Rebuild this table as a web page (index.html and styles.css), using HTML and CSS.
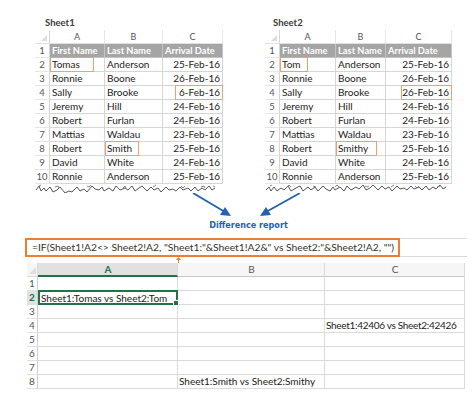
FILE: index.html
```html
<!DOCTYPE html>
<html>
<head>
<meta charset="utf-8">
<link rel="stylesheet" href="styles.css">
</head>
<body>
<div class="page">
  <div class="top">
    <div class="sheet s1">
      <div class="label">Sheet1</div>
      <div class="grid g1">
        <div class="corner"></div><div class="ch">A</div><div class="ch">B</div><div class="ch">C</div>
        <div class="rh">1</div><div class="hd">First Name</div><div class="hd">Last Name</div><div class="hd">Arrival Date</div>
        <div class="rh">2</div><div class="c"><span class="hl w43"></span>Tomas</div><div class="c">Anderson</div><div class="c d">25-Feb-16</div>
        <div class="rh">3</div><div class="c">Ronnie</div><div class="c">Boone</div><div class="c d">26-Feb-16</div>
        <div class="rh">4</div><div class="c">Sally</div><div class="c">Brooke</div><div class="c d"><span class="hl hr w47"></span>6-Feb-16</div>
        <div class="rh">5</div><div class="c">Jeremy</div><div class="c">Hill</div><div class="c d">24-Feb-16</div>
        <div class="rh">6</div><div class="c">Robert</div><div class="c">Furlan</div><div class="c d">24-Feb-16</div>
        <div class="rh">7</div><div class="c">Mattias</div><div class="c">Waldau</div><div class="c d">23-Feb-16</div>
        <div class="rh">8</div><div class="c">Robert</div><div class="c"><span class="hl w33"></span>Smith</div><div class="c d">25-Feb-16</div>
        <div class="rh">9</div><div class="c">David</div><div class="c">White</div><div class="c d">24-Feb-16</div>
        <div class="rh">10</div><div class="c">Ronnie</div><div class="c">Anderson</div><div class="c d">25-Feb-16</div>
      </div>
      <svg class="wave" width="188" height="9" viewBox="0 0 188 9">
        <path d="M1,6 l3,-4 l2,5 l3,-3 l2,3 l4,-4 l3,5 l4,-2 l3,-3 l5,6 l4,-2 l3,1 l5,-5 l3,4 l4,-2 l3,3 l5,-6 l3,3 l4,1 l3,-3 l2,4 l5,-3 l4,3 l3,-5 l4,4 l5,-2 l3,2 l4,-4 l3,5 l4,-3 l3,-2 l5,5 l4,-4 l3,3 l4,-2 l3,4 l5,-5 l3,3 l4,-1 l3,2 l4,-4 l3,3 l5,-2 l3,3 l4,-4 l3,4 l4,-3 l3,2 l4,-4 l3,4 l3,-2" fill="none" stroke="#555" stroke-width="1"/>
        <path d="M4,2 l2,-1 M20,3 l3,-1 l1,2 M52,2 l2,1 l2,-2 M88,4 l2,-2 l1,2 M118,3 l3,-2 M146,2 l2,2 l2,-2 M166,3 l3,-1 l1,2 M178,2 l2,1" fill="none" stroke="#666" stroke-width="0.8"/>
      </svg>
    </div>
    <div class="sheet s2">
      <div class="label">Sheet2</div>
      <div class="grid g2">
        <div class="corner"></div><div class="ch">A</div><div class="ch">B</div><div class="ch">C</div>
        <div class="rh">1</div><div class="hd">First Name</div><div class="hd">Last Name</div><div class="hd">Arrival Date</div>
        <div class="rh">2</div><div class="c"><span class="hl w27"></span>Tom</div><div class="c">Anderson</div><div class="c d">25-Feb-16</div>
        <div class="rh">3</div><div class="c">Ronnie</div><div class="c">Boone</div><div class="c d">26-Feb-16</div>
        <div class="rh">4</div><div class="c">Sally</div><div class="c">Brooke</div><div class="c d"><span class="hl hr w48"></span>26-Feb-16</div>
        <div class="rh">5</div><div class="c">Jeremy</div><div class="c">Hill</div><div class="c d">24-Feb-16</div>
        <div class="rh">6</div><div class="c">Robert</div><div class="c">Furlan</div><div class="c d">24-Feb-16</div>
        <div class="rh">7</div><div class="c">Mattias</div><div class="c">Waldau</div><div class="c d">23-Feb-16</div>
        <div class="rh">8</div><div class="c">Robert</div><div class="c"><span class="hl w40"></span>Smithy</div><div class="c d">25-Feb-16</div>
        <div class="rh">9</div><div class="c">David</div><div class="c">White</div><div class="c d">24-Feb-16</div>
        <div class="rh">10</div><div class="c">Ronnie</div><div class="c">Anderson</div><div class="c d">25-Feb-16</div>
      </div>
      <svg class="wave" width="187" height="9" viewBox="0 0 187 9">
        <path d="M1,6 l3,-3 l2,4 l3,-4 l3,4 l4,-3 l3,2 l4,-4 l3,5 l5,-3 l4,-2 l3,5 l5,-4 l3,3 l4,-3 l3,4 l5,-5 l3,3 l4,2 l3,-4 l2,3 l5,-3 l4,4 l3,-5 l4,4 l5,-3 l3,2 l4,-4 l3,5 l4,-2 l3,-3 l5,5 l4,-4 l3,3 l4,-2 l3,4 l5,-5 l3,3 l4,-1 l3,2 l4,-4 l3,3 l5,-2 l3,3 l4,-4 l3,4 l4,-3 l3,2 l4,-4 l3,4 l3,-2" fill="none" stroke="#555" stroke-width="1"/>
        <path d="M5,2 l2,-1 M22,3 l2,-2 l2,2 M48,2 l3,1 M70,3 l2,-2 l2,2 M100,2 l2,1 l2,-1 M126,3 l3,-2 M150,2 l2,2 l2,-2 M172,3 l3,-1" fill="none" stroke="#666" stroke-width="0.8"/>
      </svg>
    </div>
  </div>

  <svg class="arrows" width="475" height="25" viewBox="0 0 475 25">
    <line x1="193" y1="0" x2="225" y2="19" stroke="#2361b3" stroke-width="1.8"/>
    <polygon points="231,23 220,22 225,14" fill="#2361b3"/>
    <line x1="300" y1="0" x2="266" y2="19" stroke="#2361b3" stroke-width="1.8"/>
    <polygon points="260,23 266,14 271,22" fill="#2361b3"/>
  </svg>
  <div class="caption">Difference report</div>

  <div class="fbar">
    <div class="fbox">=IF(Sheet1!A2&lt;&gt; Sheet2!A2, "Sheet1:"&amp;Sheet1!A2&amp;" vs Sheet2:"&amp;Sheet2!A2, "")</div>
  </div>
  <div class="marker"><svg width="5" height="6" viewBox="0 0 5 6"><polygon points="2.5,0 5,3 3,3 3,6 2,6 2,3 0,3" fill="#ed7d31"/></svg></div>

  <div class="xl">
    <div class="xcorner"></div><div class="xch act">A</div><div class="xch">B</div><div class="xch">C</div>
    <div class="xrh">1</div><div class="xc"></div><div class="xc"></div><div class="xc"></div>
    <div class="xrh sel">2</div><div class="xc selc">Sheet1:Tomas vs Sheet2:Tom<span class="handle"></span></div><div class="xc"></div><div class="xc"></div>
    <div class="xrh">3</div><div class="xc"></div><div class="xc"></div><div class="xc"></div>
    <div class="xrh">4</div><div class="xc"></div><div class="xc"></div><div class="xc num">Sheet1:42406 vs Sheet2:42426</div>
    <div class="xrh">5</div><div class="xc"></div><div class="xc"></div><div class="xc"></div>
    <div class="xrh">6</div><div class="xc"></div><div class="xc"></div><div class="xc"></div>
    <div class="xrh">7</div><div class="xc"></div><div class="xc"></div><div class="xc"></div>
    <div class="xrh">8</div><div class="xc"></div><div class="xc">Sheet1:Smith vs Sheet2:Smithy</div><div class="xc"></div>
  </div>
</div>
</body>
</html>
```

FILE: styles.css
```css
html, body {
  margin: 0;
  padding: 0;
  background: #fff;
}
body {
  font-family: Lato, "Open Sans", "Liberation Sans", sans-serif;
  color: #222;
}
.page {
  width: 475px;
  height: 398px;
  overflow: hidden;
}
.top {
  display: flex;
  padding-top: 16px;
}
.s1 { margin-left: 35px; }
.s2 { margin-left: 42px; }
.label {
  height: 14px;
  line-height: 14px;
  font-size: 9.5px;
  font-weight: bold;
  color: #3a3a3a;
  padding-left: 10px;
}
.s2 .label { padding-left: 8px; }

.grid {
  display: grid;
  grid-auto-rows: 14px;
}
.g1 { grid-template-columns: 15px 55px 58px 60px; }
.g2 { grid-template-columns: 15px 56px 50px 66px; }
.grid > div {
  box-sizing: border-box;
  border-right: 1px solid #d6d6d6;
  border-bottom: 1px solid #d6d6d6;
  font-size: 10px;
  line-height: 13px;
  white-space: nowrap;
  position: relative;
  padding-left: 2px;
}
.grid > .corner { border-bottom-color: #e2e2e2; }
.corner::after {
  content: "";
  position: absolute;
  right: 2px;
  bottom: 2px;
  border-left: 6px solid transparent;
  border-bottom: 6px solid #dcdcdc;
}
.grid > .ch {
  text-align: center;
  font-size: 9px;
  color: #555;
  padding-left: 0;
  border-right-color: #e6e6e6;
  border-bottom-color: #e0e0e0;
}
.grid > .rh {
  text-align: center;
  font-size: 9.5px;
  color: #555;
  padding-left: 0;
  border-bottom-color: #e6e6e6;
}
.grid > .hd {
  background: #a5a5a5;
  color: #fff;
  font-weight: bold;
  font-size: 9.3px;
  padding-left: 2px;
  border-right-color: #c4c4c4;
  border-bottom-color: #c4c4c4;
}
.grid > .d {
  text-align: right;
  padding-right: 2px;
}
.hl {
  position: absolute;
  left: 0;
  top: -1px;
  height: 15px;
  box-sizing: border-box;
  border: 1px solid #f0a070;
}
.hl.hr { left: auto; right: -1px; }
.w27 { width: 28px; }
.w33 { width: 34px; }
.w40 { width: 41px; }
.w43 { width: 44px; }
.w47 { width: 48px; }
.w48 { width: 51px; }
.wave {
  display: block;
}

.arrows {
  display: block;
}
.caption {
  height: 14px;
  line-height: 14px;
  text-align: center;
  padding-left: 22px;
  font-family: "DejaVu Sans Condensed", "DejaVu Sans", sans-serif;
  font-size: 9px;
  font-weight: bold;
  color: #2361b3;
  margin-bottom: 6px;
}

.fbar {
  margin-left: 25px;
  width: 442px;
  height: 19px;
  box-sizing: border-box;
  border-top: 1px solid #dadada;
  border-bottom: 1px solid #dadada;
  display: flex;
}
.fbox {
  width: 375px;
  height: 19px;
  margin-top: -1px;
  box-sizing: border-box;
  border: 2px solid #ed7d31;
  padding-left: 5px;
  font-size: 10.3px;
  line-height: 15px;
  color: #333;
  white-space: nowrap;
}
.marker {
  height: 6px;
  padding-left: 176px;
}
.marker svg { display: block; }

.xl {
  margin-left: 27px;
  display: grid;
  grid-template-columns: 11px 140px 147px 140px;
  grid-auto-rows: 14px;
}
.xl > div {
  box-sizing: border-box;
  border-right: 1px solid #dadada;
  border-bottom: 1px solid #dadada;
  font-size: 10px;
  line-height: 13px;
  white-space: nowrap;
  position: relative;
  padding-left: 1px;
}
.xl > .num { letter-spacing: -0.3px; }
.xcorner { background: #f6f6f6; }
.xcorner::after {
  content: "";
  position: absolute;
  right: 1px;
  bottom: 2px;
  border-left: 7px solid transparent;
  border-bottom: 7px solid #dfdfdf;
}
.xl > .xch {
  background: #f6f6f6;
  text-align: center;
  color: #555;
  font-size: 10px;
  border-bottom-color: #c8c8c8;
}
.xl > .xch.act {
  background: #e1e1e1;
  color: #217346;
  font-weight: bold;
  border-bottom: 2px solid #217346;
}
.xl > .xrh {
  text-align: center;
  color: #555;
  font-size: 10px;
  padding-left: 0;
  border-bottom-color: #e2e2e2;
  border-right-color: #cfcfcf;
}
.xl > .xrh.sel {
  background: #e1e1e1;
  color: #217346;
  font-weight: bold;
}
.xl > .selc {
  border: 2px solid #217346;
  margin-top: -1px;
  height: 15px;
  line-height: 12px;
  padding-left: 1px;
  z-index: 2;
}
.handle {
  position: absolute;
  right: -3px;
  bottom: -3px;
  width: 4px;
  height: 4px;
  background: #217346;
  border: 1px solid #fff;
}
```
